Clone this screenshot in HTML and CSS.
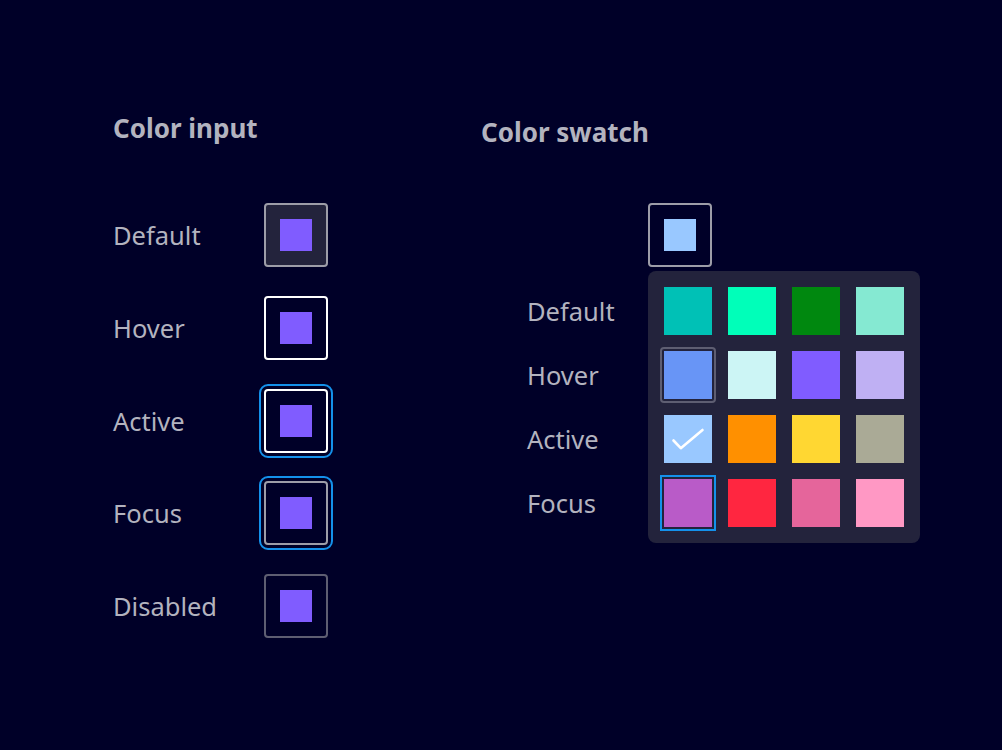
FILE: index.html
```html
<!DOCTYPE html>
<html lang="en">
<head>
<meta charset="utf-8">
<title>Color input and swatch</title>
<link rel="stylesheet" href="styles.css">
</head>
<body>
<main class="page">
  <section class="col col-input">
    <h2 class="heading">Color input</h2>
    <div class="rows">
      <div class="row"><span class="label">Default</span><div class="ci-box ci-default"><span class="ci-fill"></span></div></div>
      <div class="row"><span class="label">Hover</span><div class="ci-box ci-hover"><span class="ci-fill"></span></div></div>
      <div class="row"><span class="label">Active</span><div class="ci-box ci-active"><span class="ci-fill"></span></div></div>
      <div class="row"><span class="label">Focus</span><div class="ci-box ci-focus"><span class="ci-fill"></span></div></div>
      <div class="row"><span class="label">Disabled</span><div class="ci-box ci-disabled"><span class="ci-fill"></span></div></div>
    </div>
  </section>
  <section class="col col-swatch">
    <h2 class="heading heading-swatch">Color swatch</h2>
    <div class="sw-body">
      <div class="sw-labels">
        <span class="sw-label">Default</span>
        <span class="sw-label">Hover</span>
        <span class="sw-label">Active</span>
        <span class="sw-label">Focus</span>
      </div>
      <div class="sw-picker">
        <div class="ci-box sw-trigger"><span class="ci-fill fill-light"></span></div>
        <div class="popover">
          <span class="swatch" style="background:#00c1b6"></span>
          <span class="swatch" style="background:#00ffb9"></span>
          <span class="swatch" style="background:#00880f"></span>
          <span class="swatch" style="background:#85e9d2"></span>
          <span class="swatch is-hover" style="background:#6895f6"></span>
          <span class="swatch" style="background:#ccf5f5"></span>
          <span class="swatch" style="background:#805cff"></span>
          <span class="swatch" style="background:#bfb0f3"></span>
          <span class="swatch is-active" style="background:#99c8ff"><svg class="check" viewBox="0 0 48 48" width="48" height="48"><polyline points="9.5,25.5 16.8,33.2 38.5,15" fill="none" stroke="#ffffff" stroke-width="2.6" stroke-linecap="round" stroke-linejoin="round"/></svg></span>
          <span class="swatch" style="background:#ff9000"></span>
          <span class="swatch" style="background:#ffd732"></span>
          <span class="swatch" style="background:#aaaa96"></span>
          <span class="swatch is-focus" style="background:#b95bc8"></span>
          <span class="swatch" style="background:#ff2640"></span>
          <span class="swatch" style="background:#e5659b"></span>
          <span class="swatch" style="background:#ff98c4"></span>
        </div>
      </div>
    </div>
  </section>
</main>
</body>
</html>
```
FILE: styles.css
```css
html, body {
  margin: 0;
  padding: 0;
  background: #000028;
}
body {
  font-family: "Noto Sans", "Open Sans", sans-serif;
  color: #b3b3bf;
  width: 1002px;
  height: 750px;
  overflow: hidden;
}
.page {
  display: flex;
  padding: 110px 0 0 113px;
}
.col-input {
  width: 368px;
  flex-shrink: 0;
}
.heading {
  margin: 0;
  font-size: 26px;
  line-height: 36px;
  font-weight: 700;
  color: #b3b3bf;
}
.rows {
  margin-top: 57px;
  display: flex;
  flex-direction: column;
  gap: 28.75px;
}
.row {
  display: flex;
  align-items: center;
  height: 64px;
}
.label {
  width: 151px;
  font-size: 25.5px;
  line-height: 36px;
}
.ci-box {
  box-sizing: border-box;
  width: 64px;
  height: 64px;
  border: 2px solid #9d9da8;
  border-radius: 4px;
  display: flex;
  align-items: center;
  justify-content: center;
}
.ci-fill {
  width: 32px;
  height: 32px;
  background: #805cff;
}
.fill-light {
  background: #99c8ff;
}
.ci-default {
  background: #23233c;
}
.ci-hover {
  border-color: #ffffff;
}
.ci-active {
  border-color: #ffffff;
  outline: 2px solid #1491eb;
  outline-offset: 3px;
}
.ci-focus {
  outline: 2px solid #1491eb;
  outline-offset: 3px;
}
.ci-disabled {
  border-color: #5e5e72;
}
.col-swatch {
  padding-top: 4px;
}
.heading-swatch {
  margin-bottom: 53px;
}
.sw-body {
  display: flex;
}
.sw-labels {
  width: 167px;
  flex-shrink: 0;
  box-sizing: border-box;
  padding: 84px 0 0 46px;
  display: flex;
  flex-direction: column;
  gap: 16px;
}
.sw-label {
  height: 48px;
  display: flex;
  align-items: center;
  font-size: 25.5px;
  white-space: nowrap;
}
.sw-picker {
  display: flex;
  flex-direction: column;
  gap: 4px;
}
.sw-trigger {
  background: #000028;
}
.popover {
  width: 272px;
  box-sizing: border-box;
  padding: 16px;
  background: #23233c;
  border-radius: 8px;
  display: grid;
  grid-template-columns: repeat(4, 48px);
  gap: 16px;
}
.swatch {
  position: relative;
  width: 48px;
  height: 48px;
  display: block;
}
.swatch.is-hover::after {
  content: "";
  position: absolute;
  inset: -4px;
  border: 2px solid #5e5e72;
  border-radius: 4px;
}
.swatch.is-focus {
  outline: 2px solid #1491eb;
  outline-offset: 2px;
}
.check {
  display: block;
}
```
